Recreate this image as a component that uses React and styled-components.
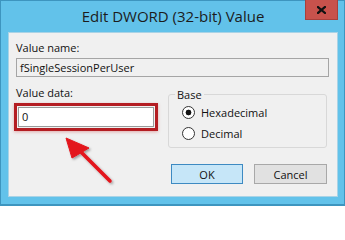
import React from "react";
import styled, { createGlobalStyle } from "styled-components";

const GlobalStyle = createGlobalStyle`
    html, body {
        margin: 0;
        padding: 0;
        background: #ffffff;
    }
    * {
        box-sizing: border-box;
    }
`;

const EditDwordDialog = () => {
    return (
        <Window>
            <GlobalStyle />
            <TitleBar>
                <span />
                <Title>Edit DWORD (32-bit) Value</Title>
                <CloseButton aria-label="Close">
                    <svg width="9" height="8" viewBox="0 0 9 8">
                        <path d="M1 1 L8 7 M8 1 L1 7" stroke="#111" strokeWidth="2.3" strokeLinecap="square" />
                    </svg>
                </CloseButton>
            </TitleBar>

            <Panel>
                <Label>Value name:</Label>
                <NameField>fSingleSessionPerUser</NameField>

                <DataRow>
                    <div>
                        <Label $top={8}>Value data:</Label>
                        <Highlight>
                            <DataField>0</DataField>
                        </Highlight>
                    </div>

                    <GroupBox>
                        <legend>Base</legend>
                        <Radio $checked>Hexadecimal</Radio>
                        <Radio>Decimal</Radio>
                    </GroupBox>
                </DataRow>

                <Buttons>
                    <Button $primary>OK</Button>
                    <Button>Cancel</Button>
                </Buttons>
            </Panel>

            {/* red annotation arrow drawn over the dialog */}
            <Arrow width="345" height="206" viewBox="0 0 345 206">
                <defs>
                    <filter id="arrow-shadow" x="-20%" y="-20%" width="140%" height="140%">
                        <feDropShadow dx="1.5" dy="1.5" stdDeviation="1" floodColor="#000" floodOpacity="0.35" />
                    </filter>
                </defs>
                <g filter="url(#arrow-shadow)" fill="#e3141b" stroke="#e3141b">
                    <line x1="80" y1="151" x2="110" y2="181" strokeWidth="3.5" strokeLinecap="round" />
                    <polygon points="66,138 72,158 89,148" strokeWidth="1" strokeLinejoin="round" />
                </g>
            </Arrow>
        </Window>
    );
};

export default EditDwordDialog;

const Window = styled.div`
    position: relative;
    width: 345px;
    height: 206px;
    display: flex;
    flex-direction: column;
    padding: 0 6px 7px 7px;
    background-color: #62c2ea;
    border: 1px solid #3d95bf;
    border-bottom-width: 2px;
    font-family: "Open Sans", "Noto Sans", sans-serif;
    color: #111;
`;

const TitleBar = styled.div`
    height: 31px;
    display: grid;
    grid-template-columns: 1fr auto 1fr;
    align-items: start;
`;

const Title = styled.div`
    padding-top: 5px;
    font-size: 15px;
    line-height: 20px;
    color: #1c1c1c;
    white-space: nowrap;
`;

const CloseButton = styled.div`
    justify-self: end;
    width: 33px;
    height: 20px;
    margin-top: -1px;
    display: flex;
    align-items: center;
    justify-content: center;
    background-color: #c8524c;
    border: 1px solid #a8403b;
    border-top: none;
`;

const Panel = styled.div`
    flex: 1;
    display: flex;
    flex-direction: column;
    padding: 7px 10px 0 7px;
    background-color: #f0f0f0;
    border: 1px solid #a9d3e6;
`;

const Label = styled.div`
    margin-top: ${(p) => p.$top || 0}px;
    font-size: 11px;
    line-height: 15px;
`;

const NameField = styled.div`
    height: 19px;
    margin: 3px -2px 0 0;
    padding: 0 3px;
    font-size: 11px;
    line-height: 17px;
    background-color: #f0f0f0;
    border: 1px solid #a5a5a5;
`;

const DataRow = styled.div`
    display: grid;
    grid-template-columns: 140px 1fr;
    column-gap: 12px;
    align-items: start;
`;

const Highlight = styled.div`
    width: calc(100% + 4px);
    margin: 3px 0 0 -2px;
    padding: 1px;
    border: 3px solid #b41d22;
    box-shadow: 0 1px 3px rgba(200, 40, 40, 0.35);
`;

const DataField = styled.div`
    height: 20px;
    padding: 0 3px;
    font-size: 11px;
    line-height: 18px;
    background-color: #ffffff;
    border: 1px solid #9a9a9a;
`;

const GroupBox = styled.fieldset`
    margin: 10px 0 0 0;
    padding: 0 0 5px 13px;
    height: 61px;
    border: 1px solid #d8d8d8;
    border-radius: 3px;

    legend {
        margin-left: -7px;
        padding: 0 2px;
        font-size: 11px;
        line-height: 15px;
    }
`;

const Radio = styled.div`
    display: flex;
    align-items: center;
    gap: 6px;
    height: 21px;
    font-size: 11px;

    &::before {
        content: "";
        width: 11px;
        height: 11px;
        border-radius: 50%;
        border: 1px solid #333;
        background: ${(p) =>
            p.$checked
                ? "radial-gradient(circle, #111 0 2.6px, #fff 3.2px)"
                : "#fff"};
    }
`;

const Buttons = styled.div`
    margin-top: 16px;
    display: flex;
    justify-content: flex-end;
    gap: 11px;
`;

const Button = styled.div`
    width: ${(p) => (p.$primary ? 72 : 73)}px;
    height: 20px;
    display: flex;
    align-items: center;
    justify-content: center;
    font-size: 11px;
    background-color: ${(p) => (p.$primary ? "#c6e6f8" : "#e1e1e1")};
    border: 1px solid ${(p) => (p.$primary ? "#3d8ac2" : "#a8a8a8")};
`;

const Arrow = styled.svg`
    position: absolute;
    top: -1px;
    left: -1px;
    pointer-events: none;
`;
